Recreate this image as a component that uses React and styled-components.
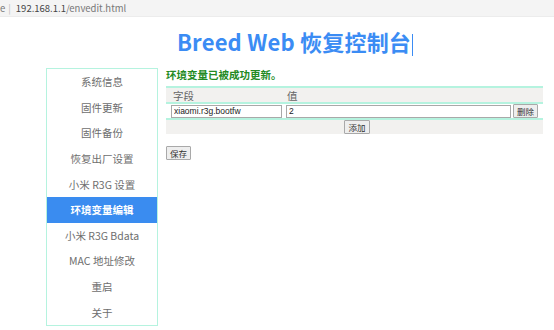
import React from "react";
import styled, { createGlobalStyle } from "styled-components";

const GlobalStyle = createGlobalStyle`
  html, body {
    margin: 0;
    padding: 0;
    background: #fff;
    font-family: "Noto Sans CJK SC", "Noto Sans", sans-serif;
  }
`;

const AddressBar = styled.div`
  height: 16px;
  background: #f4f4f4;
  border-bottom: 1px solid #ececec;
  display: flex;
  align-items: center;
  font-size: 9.5px;
  color: #444;
  white-space: nowrap;

  span {
    color: #bbb;
    margin: 0 5px 0 3px;
  }
  em {
    font-style: normal;
    color: #777;
  }
`;

const Title = styled.h1`
  margin: 9px 0 0 0;
  text-align: center;
  padding-left: 36px;
  height: 30px;
  font-size: 22px;
  line-height: 30px;
  font-weight: 700;
  color: #3b8cf4;
  letter-spacing: 0.2px;

  i {
    display: inline-block;
    width: 1px;
    height: 22px;
    background: #3b8cf4;
    vertical-align: middle;
    margin-left: 1px;
  }
`;

const Layout = styled.div`
  display: flex;
  margin: 12px 0 0 46px;
  gap: 8px;
`;

const Sidebar = styled.ul`
  list-style: none;
  margin: 0;
  padding: 0;
  width: 110px;
  height: 256px;
  border: 1px solid #b5f3df;
  display: flex;
  flex-direction: column;
`;

const NavItem = styled.li`
  flex: 1;
  display: flex;
  align-items: center;
  justify-content: center;
  font-size: 10.5px;
  color: ${(p) => (p.$active ? "#fff" : "#6e6e6e")};
  font-weight: ${(p) => (p.$active ? 700 : 400)};
  background: ${(p) => (p.$active ? "#3a8cf0" : "transparent")};
`;

const Content = styled.div`
  width: 377px;
`;

const Message = styled.div`
  font-size: 10.5px;
  font-weight: 700;
  color: #238a23;
  height: 14px;
  line-height: 14px;
`;

const Table = styled.div`
  margin-top: 4px;
  display: flex;
  flex-direction: column;
`;

const Row = styled.div`
  box-sizing: border-box;
  display: flex;
  align-items: center;
  gap: 4px;
  height: 16px;
  padding: 0 0 0 5px;
  background: ${(p) => (p.$shade ? "#f2f1ef" : "#fff")};
  border-top: 2px solid #b5f3df;
  justify-content: ${(p) => (p.$center ? "center" : "flex-start")};
`;

const HeadCell = styled.div`
  width: ${(p) => p.$w}px;
  font-size: 10.5px;
  color: #666;
  padding-left: 2px;
`;

const Input = styled.input`
  box-sizing: border-box;
  width: ${(p) => p.$w}px;
  height: 13px;
  border: 1px solid #a9a9a9;
  padding: 0 2px;
  font-family: "Liberation Sans", Arial, sans-serif;
  font-size: 8.5px;
  color: #222;
  outline: none;
`;

const Button = styled.button`
  box-sizing: border-box;
  height: 14px;
  padding: 0 3px;
  margin-left: ${(p) => p.$pull || 0}px;
  border: 1px solid #a9a9a9;
  border-radius: 1px;
  background: #eeeeee;
  font-family: "Noto Sans CJK SC", sans-serif;
  font-size: 8.5px;
  line-height: 12px;
  color: #333;
`;

const SaveRow = styled.div`
  display: flex;
  margin-top: 12px;
`;

const items = [
  "系统信息",
  "固件更新",
  "固件备份",
  "恢复出厂设置",
  "小米 R3G 设置",
  "环境变量编辑",
  "小米 R3G Bdata",
  "MAC 地址修改",
  "重启",
  "关于",
];

export default function App() {
  return (
    <>
      <GlobalStyle />
      <AddressBar>
        <em>e</em>
        <span>|</span>
        192.168.1.1<em>/envedit.html</em>
      </AddressBar>
      <Title>
        Breed Web 恢复控制台<i />
      </Title>
      <Layout>
        <Sidebar>
          {items.map((t) => (
            <NavItem key={t} $active={t === "环境变量编辑"}>
              {t}
            </NavItem>
          ))}
        </Sidebar>
        <Content>
          <Message>环境变量已被成功更新。</Message>
          <Table>
            <Row $shade>
              <HeadCell $w={108}>字段</HeadCell>
              <HeadCell $w={200}>值</HeadCell>
            </Row>
            <Row>
              <Input $w={111} defaultValue="xiaomi.r3g.bootfw" />
              <Input $w={225} defaultValue="2" />
              <Button $pull={-2}>删除</Button>
            </Row>
            <Row $shade $center>
              <Button>添加</Button>
            </Row>
          </Table>
          <SaveRow>
            <Button>保存</Button>
          </SaveRow>
        </Content>
      </Layout>
    </>
  );
}
